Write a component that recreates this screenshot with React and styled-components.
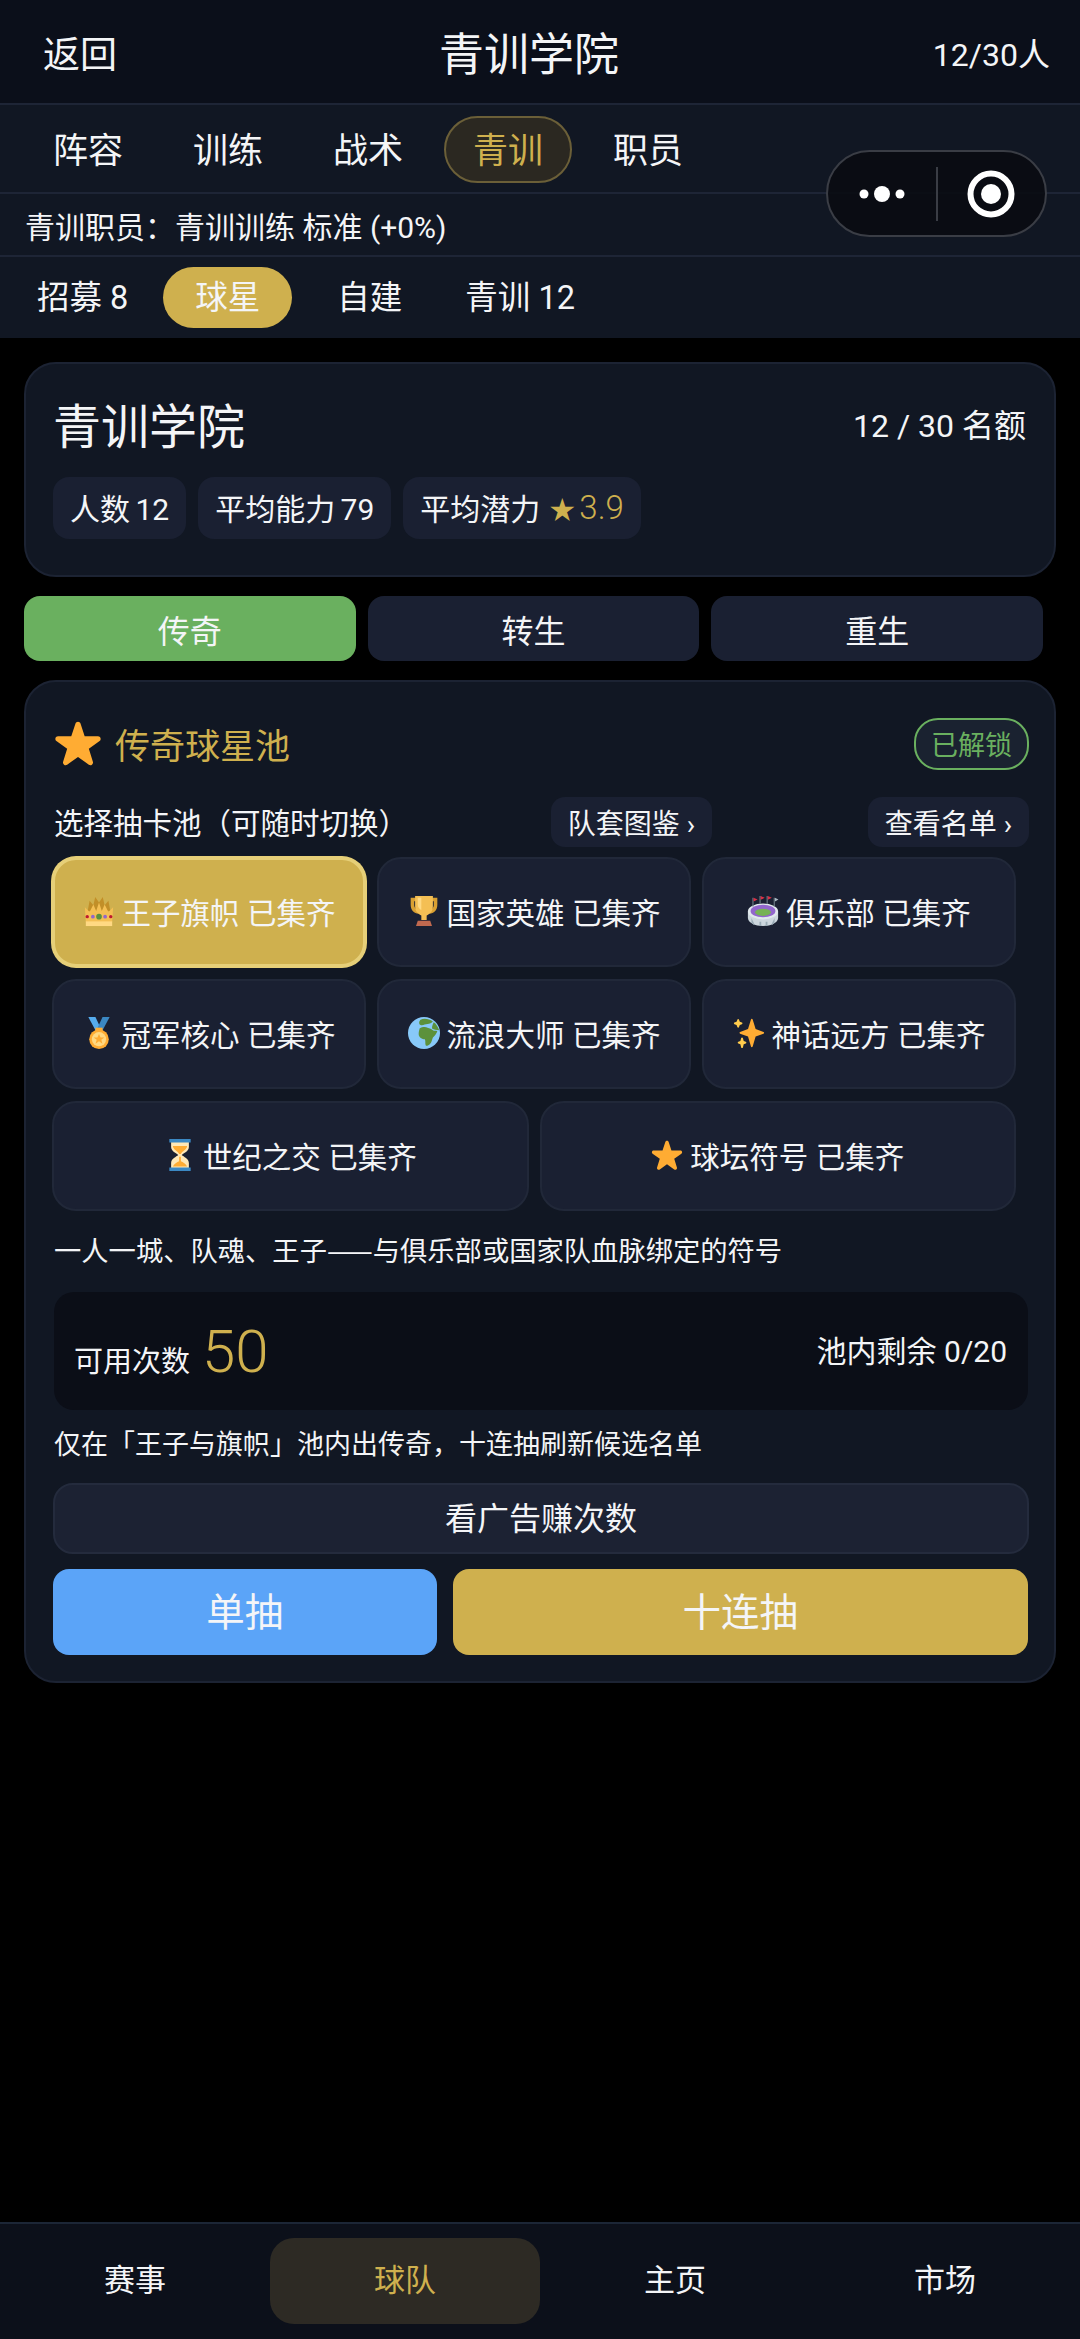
import React from 'react';
import styled, { createGlobalStyle } from 'styled-components';

const GlobalStyle = createGlobalStyle`
  html, body {
    margin: 0;
    padding: 0;
    background: #000;
  }
  body {
    font-family: "Roboto", "Noto Sans CJK SC", sans-serif;
    color: #f4f5f7;
  }
  * {
    box-sizing: border-box;
  }
`;

const gold = '#cfb04e';

const Page = styled.div`
  position: relative;
  width: 1080px;
  height: 2339px;
  display: flex;
  flex-direction: column;
  background: #000;
`;

const Header = styled.div`
  height: 105px;
  display: flex;
  align-items: center;
  justify-content: space-between;
  padding: 0 30px 0 43px;
  background: #0b0f1a;
  border-bottom: 2px solid #1e2536;
`;
const BackLink = styled.div`
  width: 235px;
  font-size: 37px;
`;
const HeaderTitle = styled.div`
  margin-top: 8px;
  font-size: 45px;
  line-height: 60px;
`;
const HeaderCount = styled.div`
  width: 270px;
  text-align: right;
  font-size: 32px;
`;

const NavRow = styled.div`
  height: 89px;
  display: flex;
  align-items: center;
  gap: 12px;
  padding: 2px 24px 0;
  background: #111723;
  border-bottom: 2px solid #1e2536;
`;
const NavTab = styled.div`
  width: 128px;
  height: 67px;
  padding-bottom: 5px;
  display: flex;
  align-items: center;
  justify-content: center;
  font-size: 35px;
  border-radius: 34px;
  border: 2px solid ${(props) => (props.$active ? '#6b5f38' : 'transparent')};
  background: ${(props) => (props.$active ? '#2b2821' : 'transparent')};
  color: ${(props) => (props.$active ? gold : '#f4f5f7')};
`;

const StaffRow = styled.div`
  height: 63px;
  display: flex;
  align-items: center;
  padding: 0 25px;
  font-size: 30px;
  background: #111723;
  border-bottom: 2px solid #1e2536;
`;

const SubRow = styled.div`
  height: 81px;
  display: flex;
  align-items: center;
  gap: 3px;
  padding: 0 5px;
  background: #111723;
`;
const SubTab = styled.div`
  height: 61px;
  padding: 0 32px 6px;
  margin-left: ${(props) => props.$gap || 0}px;
  display: flex;
  align-items: center;
  font-size: 32.5px;
  border-radius: 31px;
  background: ${(props) => (props.$active ? gold : 'transparent')};
`;

const Content = styled.div`
  flex: 1;
  display: flex;
  flex-direction: column;
  padding: 24px 24px 0;
`;

const Card = styled.div`
  background: #111723;
  border: 2px solid #1c2333;
  border-radius: 32px;
`;

const SummaryCard = styled(Card)`
  height: 215px;
  padding: 24px 28px 0 27px;
`;
const SummaryTop = styled.div`
  height: 70px;
  display: flex;
  align-items: center;
  justify-content: space-between;
`;
const SummaryTitle = styled.div`
  font-size: 48px;
`;
const SummaryQuota = styled.div`
  font-size: 32px;
`;
const ChipRow = styled.div`
  display: flex;
  gap: 12px;
  margin-top: 19px;
`;
const Chip = styled.div`
  height: 62px;
  padding: 0 17px 2px;
  display: flex;
  align-items: center;
  gap: 9px;
  font-size: 30px;
  word-spacing: -2px;
  background: #1a2032;
  border-radius: 16px;
`;
const GoldText = styled.span`
  font-size: 33px;
  font-weight: 300;
  color: ${gold};
`;
const ChipStar = styled.span`
  font-size: 26px;
  margin-right: 4px;
`;

const ModeRow = styled.div`
  display: flex;
  gap: 12px;
  width: 1019px;
  margin: 19px 0;
`;
const ModeTab = styled.div`
  flex: 1;
  height: 65px;
  display: flex;
  align-items: center;
  justify-content: center;
  font-size: 32px;
  border-radius: 16px;
  background: ${(props) => (props.$active ? '#6ab05f' : '#1a2032')};
`;

const PoolCard = styled(Card)`
  height: 1003px;
  padding: 36px 25px 0 28px;
`;
const PoolHeader = styled.div`
  height: 52px;
  display: flex;
  align-items: center;
  justify-content: space-between;
`;
const PoolTitle = styled.div`
  display: flex;
  align-items: center;
  gap: 13px;
  padding-bottom: 2px;
  font-size: 35px;
  color: ${gold};
`;
const UnlockBadge = styled.div`
  height: 52px;
  padding: 0 17px 2px;
  width: 115px;
  display: flex;
  align-items: center;
  justify-content: center;
  white-space: nowrap;
  font-size: 27px;
  color: #6ab05f;
  border: 2px solid #6ab05f;
  border-radius: 24px;
  background: #1a2230;
`;
const PickerRow = styled.div`
  height: 50px;
  margin-top: 27px;
  display: flex;
  align-items: center;
  font-size: 29.5px;
`;
const PickerLabel = styled.div`
  flex: 1;
  padding-bottom: 3px;
`;
const LinkButton = styled.div`
  width: 161px;
  height: 50px;
  display: flex;
  align-items: center;
  justify-content: center;
  font-size: 28px;
  background: #1a2032;
  border-radius: 14px;
  margin-left: ${(props) => props.$gap || 0}px;
`;

const PoolGrid = styled.div`
  width: 964px;
  margin: 10px 0 0 -2px;
  display: grid;
  grid-template-columns: repeat(6, 1fr);
  gap: 12px 11px;
`;
const PoolItem = styled.div`
  grid-column: span ${(props) => props.$span};
  height: 110px;
  padding-bottom: 3px;
  display: flex;
  align-items: center;
  justify-content: center;
  gap: 7px;
  font-size: 29.5px;
  border-radius: 24px;
  background: ${(props) => (props.$active ? gold : '#1a2032')};
  border: ${(props) => (props.$active ? '3px solid #e6cf78' : '2px solid #212839')};
  box-shadow: ${(props) => (props.$active ? '0 0 0 1px #e6cf78' : 'none')};
`;

const PoolDesc = styled.div`
  margin-top: 20px;
  height: 36px;
  line-height: 36px;
  font-family: "Noto Sans CJK SC", sans-serif;
  font-size: 27.3px;
  white-space: nowrap;
`;
const StatBox = styled.div`
  height: 118px;
  margin: 25px 1px 0 0;
  padding: 0 21px 0 20px;
  display: flex;
  align-items: center;
  justify-content: space-between;
  background: #0b0e17;
  border-radius: 20px;
`;
const StatLeft = styled.div`
  display: flex;
  align-items: baseline;
  gap: 12px;
  font-size: 29px;
`;
const StatNumber = styled.span`
  font-size: 60px;
  font-weight: 300;
  color: ${gold};
`;
const StatRight = styled.div`
  font-size: 30px;
  margin-bottom: 5px;
`;
const PoolHint = styled.div`
  margin-top: 17px;
  height: 36px;
  line-height: 36px;
  font-size: 27px;
`;
const AdButton = styled.div`
  height: 71px;
  margin: 20px 0 0 -1px;
  padding-bottom: 5px;
  display: flex;
  align-items: center;
  justify-content: center;
  font-size: 32px;
  background: #1c2233;
  border: 2px solid #242b3d;
  border-radius: 20px;
`;
const DrawRow = styled.div`
  display: flex;
  gap: 16px;
  margin: 15px 1px 0 -1px;
`;
const DrawButton = styled.div`
  flex: ${(props) => props.$grow};
  height: 86px;
  padding-bottom: 6px;
  display: flex;
  align-items: center;
  justify-content: center;
  font-size: 38.5px;
  border-radius: 16px;
  background: ${(props) => props.$color};
`;

const BottomNav = styled.div`
  height: 117px;
  padding-bottom: 2px;
  display: grid;
  grid-template-columns: repeat(4, 1fr);
  align-items: center;
  background: #0c101a;
  border-top: 2px solid #1c2636;
`;
const BottomItem = styled.div`
  height: 86px;
  padding-bottom: 6px;
  display: flex;
  align-items: center;
  justify-content: center;
  font-size: 31px;
  border-radius: 24px;
  background: ${(props) => (props.$active ? '#2d2a24' : 'transparent')};
  color: ${(props) => (props.$active ? gold : '#f4f5f7')};
`;

// wechat mini program capsule, sits over the tab rows
const Capsule = styled.div`
  position: absolute;
  left: 826px;
  top: 150px;
  width: 221px;
  height: 87px;
  display: flex;
  align-items: center;
  background: rgba(10, 12, 18, 0.92);
  border: 2px solid #3a3d45;
  border-radius: 44px;
`;
const CapsuleSide = styled.div`
  flex: 1;
  height: 100%;
  display: flex;
  align-items: center;
  justify-content: center;
`;
const CapsuleDivider = styled.div`
  width: 2px;
  height: 54px;
  background: #3a3d45;
`;

const MoreIcon = () => (
  <svg width="46" height="18" viewBox="0 0 46 18">
    <circle cx="5" cy="9" r="4.5" fill="#fff" />
    <circle cx="23" cy="9" r="8" fill="#fff" />
    <circle cx="41" cy="9" r="4.5" fill="#fff" />
  </svg>
);

const TargetIcon = () => (
  <svg width="48" height="48" viewBox="0 0 48 48">
    <circle cx="24" cy="24" r="20.5" fill="none" stroke="#fff" strokeWidth="6" />
    <circle cx="24" cy="24" r="10" fill="#fff" />
  </svg>
);

const STAR =
  'M27.287 34.627c-.404 0-.806-.124-1.152-.371L18 28.422l-8.135 5.834c-.693.496-1.623.496-2.312-.008-.689-.499-.979-1.385-.721-2.194l3.034-9.792-8.062-5.681c-.685-.505-.97-1.393-.708-2.203.264-.808 1.016-1.357 1.866-1.363L12.947 13l3.179-9.549c.268-.809 1.023-1.353 1.874-1.353.851 0 1.606.545 1.875 1.353L23 13l10.036.015c.853.006 1.606.556 1.867 1.363.263.81-.022 1.698-.708 2.203l-8.062 5.681 3.034 9.792c.26.809-.033 1.695-.72 2.194-.347.254-.753.379-1.16.379z';

const StarIcon = ({ size = 32 }) => (
  <svg width={size} height={size} viewBox="0 0 36 36">
    <path fill="#FFAC33" d={STAR} />
  </svg>
);

const CrownIcon = () => (
  <svg width="32" height="32" viewBox="2 1 32 34">
    <path fill="#C28F28" d="M6 18l2-11 4 5 2-9 4 6 4-6 2 9 4-5 2 11z" />
    <path fill="#F4BF54" d="M3 14l5 5 4-8 3 7 3-9 3 9 3-7 4 8 5-5-1 16H4z" />
    <path fill="#FFD983" d="M4 29h28v5H4z" />
    <circle cx="18" cy="24" r="3" fill="#5C913B" />
    <circle cx="11.5" cy="24" r="2" fill="#9266CC" />
    <circle cx="24.5" cy="24" r="2" fill="#9266CC" />
    <circle cx="5.5" cy="24" r="1.8" fill="#BE1931" />
    <circle cx="30.5" cy="24" r="1.8" fill="#BE1931" />
  </svg>
);

const TrophyIcon = () => (
  <svg width="32" height="32" viewBox="0 0 36 36">
    <path fill="#D9A032" d="M3 3h30v8c0 6-4 10-9 10v-4c3 0 5-3 5-6V7H7v4c0 3 2 6 5 6v4c-5 0-9-4-9-10z" />
    <path fill="#F4BF54" d="M8 1h20v12c0 6-4 9-7 10v5h-6v-5c-3-1-7-4-7-10z" />
    <path fill="#FFD983" d="M11 3h4v14c-2-1-4-3-4-6z" />
    <path fill="#C1694F" d="M11 29h14l2 6H9z" />
  </svg>
);

const StadiumIcon = () => (
  <svg width="32" height="32" viewBox="0 0 36 36">
    <path fill="#CCD6DD" d="M1 19h34v7c0 5-8 9-17 9S1 31 1 26z" />
    <path fill="#99AAB5" d="M5 26l3 6v2l-3-3zM14 30h2v4.8h-2zM21 30h2v4.8h-2zM31 26l-3 6v2l3-3z" />
    <ellipse cx="18" cy="18.5" rx="17" ry="9" fill="#E1E8ED" />
    <ellipse cx="18" cy="18" rx="14" ry="7" fill="#9266CC" />
    <ellipse cx="18" cy="19.5" rx="9" ry="4" fill="#77B255" />
    <path fill="#66757F" d="M6 3h1.4v10H6zM14 1h1.4v9H14zM22 1h1.4v9H22zM30 3h1.4v10H30z" />
    <path fill="#DD2E44" d="M7.4 3l4.5 2.2-4.5 2.2zM15.4 1l4.5 2.2-4.5 2.2zM23.4 1l4.5 2.2-4.5 2.2z" />
    <path fill="#AAB8C2" d="M31.4 3l4 2.2-4 2.2z" />
  </svg>
);

const MedalIcon = () => (
  <svg width="32" height="32" viewBox="0 0 36 36">
    <path fill="#55ACEE" d="M6 0h8l6 13-5 4z" />
    <path fill="#3B88C3" d="M30 0h-8l-6 13 5 4z" />
    <path fill="#FFAC33" d="M14 12h8v4h-8z" />
    <circle cx="18" cy="25" r="11" fill="#FFAC33" />
    <circle cx="18" cy="25" r="8" fill="#FFD983" />
    <path fill="#FFAC33" d="M18 19l1.8 4h4.2l-3.4 2.6 1.3 4.4-3.9-2.6-3.9 2.6 1.3-4.4-3.4-2.6h4.2z" />
  </svg>
);

const GlobeIcon = () => (
  <svg width="32" height="32" viewBox="0 0 36 36">
    <circle cx="18" cy="18" r="18" fill="#88C9F9" />
    <path fill="#5C913B" d="M14 3c4-2 10-1 14 2-1 2-4 2-6 3-3 0-5 2-8 1-2-1-2-4 0-6z" />
    <path fill="#5C913B" d="M29 6c3 2 5 6 6 9-3 0-6-1-8-2 0-3 1-5 2-7z" />
    <path fill="#5C913B" d="M13 13c3-2 7-2 9-1 2 1 5 1 6 3 1 1 4 0 5 1-1 3-3 5-5 7-1 2-1 5-3 7-2 2-4 3-5 2-1-2 0-5-1-7-3 0-7-2-7-6 0-3 1-5 1-6z" />
  </svg>
);

const SparklesIcon = () => (
  <svg width="32" height="32" viewBox="0 0 36 36">
    <path fill="#FFAC33" d="M34.347 16.893l-8.899-3.294-3.323-10.891c-.128-.42-.517-.708-.956-.708-.439 0-.828.288-.956.708l-3.322 10.891-8.9 3.294c-.393.146-.653.519-.653.938 0 .418.26.793.653.938l8.895 3.293 3.324 11.223c.126.424.516.715.959.715.442 0 .833-.291.959-.716l3.324-11.223 8.896-3.293c.391-.144.652-.518.652-.937 0-.418-.261-.792-.653-.938z" />
    <path fill="#FFCC4D" d="M14.347 27.894l-2.314-.856-.9-3.3c-.118-.436-.513-.738-.964-.738-.451 0-.846.302-.965.737l-.9 3.3-2.313.856c-.393.145-.653.52-.653.938 0 .418.26.793.653.938l2.301.853.907 3.622c.112.444.511.756.97.756.459 0 .858-.312.97-.757l.907-3.622 2.301-.853c.393-.144.653-.519.653-.937 0-.418-.26-.793-.653-.937zM10.009 6.231l-2.364-.875-.876-2.365c-.145-.393-.519-.653-.938-.653-.418 0-.792.26-.938.653l-.875 2.365-2.365.875c-.393.146-.653.52-.653.938 0 .418.26.793.653.938l2.365.875.875 2.365c.146.393.52.653.938.653.418 0 .792-.26.938-.653l.875-2.365 2.365-.875c.393-.146.653-.52.653-.938 0-.418-.26-.792-.653-.938z" />
  </svg>
);

const HourglassIcon = () => (
  <svg width="32" height="32" viewBox="0 0 36 36">
    <path fill="#FFE8B6" d="M8 3h20v6c0 5-6 7-8 9 2 2 8 4 8 9v6H8v-6c0-5 6-7 8-9-2-2-8-4-8-9z" />
    <path fill="#FFAC33" d="M10 8h16c0 4-6 6-7 9h-2c-1-3-7-5-7-9zM17 20h2v5c2 1 6 3 7 6H10c1-3 5-5 7-6z" />
    <path fill="#3B88C3" d="M6 0h24v4H6zM6 32h24v4H6z" />
  </svg>
);

const pools = [
  { name: '王子旗帜', icon: <CrownIcon />, span: 2, active: true },
  { name: '国家英雄', icon: <TrophyIcon />, span: 2 },
  { name: '俱乐部', icon: <StadiumIcon />, span: 2 },
  { name: '冠军核心', icon: <MedalIcon />, span: 2 },
  { name: '流浪大师', icon: <GlobeIcon />, span: 2 },
  { name: '神话远方', icon: <SparklesIcon />, span: 2 },
  { name: '世纪之交', icon: <HourglassIcon />, span: 3 },
  { name: '球坛符号', icon: <StarIcon />, span: 3 },
];

const navTabs = ['阵容', '训练', '战术', '青训', '职员'];
const subTabs = [
  { label: '招募 8' },
  { label: '球星', active: true },
  { label: '自建', gap: 10 },
  { label: '青训 12', gap: -4 },
];
const modeTabs = ['传奇', '转生', '重生'];
const bottomTabs = ['赛事', '球队', '主页', '市场'];

const App = () => {
  return (
    <Page>
      <GlobalStyle />
      <Header>
        <BackLink>返回</BackLink>
        <HeaderTitle>青训学院</HeaderTitle>
        <HeaderCount>12/30人</HeaderCount>
      </Header>
      <NavRow>
        {navTabs.map((tab) => (
          <NavTab key={tab} $active={tab === '青训'}>
            {tab}
          </NavTab>
        ))}
      </NavRow>
      <StaffRow>青训职员：青训训练 标准 (+0%)</StaffRow>
      <SubRow>
        {subTabs.map((tab) => (
          <SubTab key={tab.label} $active={tab.active} $gap={tab.gap}>
            {tab.label}
          </SubTab>
        ))}
      </SubRow>

      <Content>
        <SummaryCard>
          <SummaryTop>
            <SummaryTitle>青训学院</SummaryTitle>
            <SummaryQuota>12 / 30 名额</SummaryQuota>
          </SummaryTop>
          <ChipRow>
            <Chip>人数 12</Chip>
            <Chip>平均能力 79</Chip>
            <Chip>
              平均潜力
              <GoldText>
                <ChipStar>★</ChipStar>3.9
              </GoldText>
            </Chip>
          </ChipRow>
        </SummaryCard>

        <ModeRow>
          {modeTabs.map((tab) => (
            <ModeTab key={tab} $active={tab === '传奇'}>
              {tab}
            </ModeTab>
          ))}
        </ModeRow>

        <PoolCard>
          <PoolHeader>
            <PoolTitle>
              <StarIcon size={48} />
              传奇球星池
            </PoolTitle>
            <UnlockBadge>已解锁</UnlockBadge>
          </PoolHeader>
          <PickerRow>
            <PickerLabel>选择抽卡池（可随时切换）</PickerLabel>
            <LinkButton>队套图鉴 ›</LinkButton>
            <LinkButton $gap={156}>查看名单 ›</LinkButton>
          </PickerRow>
          <PoolGrid>
            {pools.map((pool) => (
              <PoolItem key={pool.name} $span={pool.span} $active={pool.active}>
                {pool.icon}
                {pool.name} 已集齐
              </PoolItem>
            ))}
          </PoolGrid>
          <PoolDesc>一人一城、队魂、王子——与俱乐部或国家队血脉绑定的符号</PoolDesc>
          <StatBox>
            <StatLeft>
              可用次数 <StatNumber>50</StatNumber>
            </StatLeft>
            <StatRight>池内剩余 0/20</StatRight>
          </StatBox>
          <PoolHint>仅在「王子与旗帜」池内出传奇，十连抽刷新候选名单</PoolHint>
          <AdButton>看广告赚次数</AdButton>
          <DrawRow>
            <DrawButton $grow={2} $color="#5ba4f8">单抽</DrawButton>
            <DrawButton $grow={3} $color={gold}>十连抽</DrawButton>
          </DrawRow>
        </PoolCard>
      </Content>

      <BottomNav>
        {bottomTabs.map((tab) => (
          <BottomItem key={tab} $active={tab === '球队'}>
            {tab}
          </BottomItem>
        ))}
      </BottomNav>

      <Capsule>
        <CapsuleSide>
          <MoreIcon />
        </CapsuleSide>
        <CapsuleDivider />
        <CapsuleSide>
          <TargetIcon />
        </CapsuleSide>
      </Capsule>
    </Page>
  );
};

export default App;
